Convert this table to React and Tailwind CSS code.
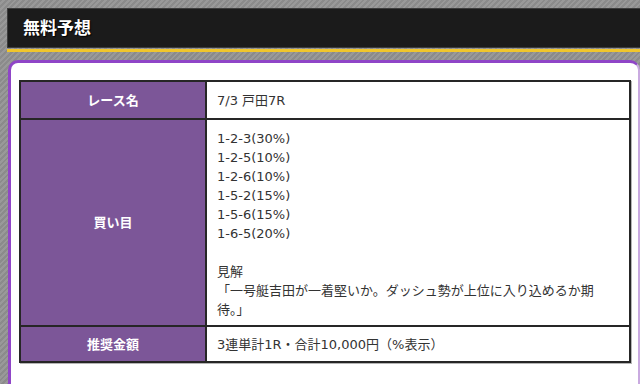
import React from 'react';

const rows = [
  { label: 'レース名', pad: 'pt-[9px] pb-[8px]', body: ['7/3 戸田7R'] },
  {
    label: '買い目',
    pad: 'pt-[9px] pb-[6px]',
    body: [
      '1-2-3(30%)',
      '1-2-5(10%)',
      '1-2-6(10%)',
      '1-5-2(15%)',
      '1-5-6(15%)',
      '1-6-5(20%)',
      '',
      '見解',
      '「一号艇吉田が一着堅いか。ダッシュ勢が上位に入り込めるか期',
      '待。」',
    ],
  },
  { label: '推奨金額', pad: 'pt-2 pb-[7px]', body: ['3連単計1R・合計10,000円（%表示）'] },
];

export default function App() {
  return (
    <div className="h-[384px] overflow-hidden pt-2 font-['DejaVu_Sans','Noto_Sans_CJK_JP',sans-serif] bg-[repeating-linear-gradient(135deg,#8b8b8b_0,#8b8b8b_2px,#999999_2px,#999999_4px)]">
      {/* title bar */}
      <div className="ml-[7px] h-[40px] flex items-center pl-[15px] bg-[#1b1b1b] border border-r-0 border-[#3c3c3c]">
        <h1 className="text-white font-bold text-[17px] leading-none [text-shadow:1px_1px_1px_#000]">無料予想</h1>
      </div>
      <div className="ml-[7px] mt-[1px] h-[3px] bg-[#f0c62c]" />

      {/* panel */}
      <div className="mt-2 ml-2 h-[400px] bg-white border-t-[3px] border-l-[3px] border-r-2 border-[#8f45c7] border-r-[#c9aae0] rounded-t-[10px] pt-[17px] pl-2 pr-[7px]">
        <div className="border-2 border-[#262626] shadow-[1px_1px_0_#b5b5b5] text-[13px] leading-[19px]">
          {rows.map((row, i) => (
            <div key={row.label} className={`flex ${i < rows.length - 1 ? 'border-b-2 border-[#262626]' : ''}`}>
              <div className="w-[186px] shrink-0 flex items-center justify-center bg-[#7c5698] border-r-2 border-[#262626] text-white font-bold">
                {row.label}
              </div>
              <div className={`flex-1 pl-[10px] pr-2 text-[#333] ${row.pad}`}>
                {row.body.map((line, j) => (
                  <div key={j} className="h-[19px] whitespace-nowrap">{line}</div>
                ))}
              </div>
            </div>
          ))}
        </div>
      </div>
    </div>
  );
}
